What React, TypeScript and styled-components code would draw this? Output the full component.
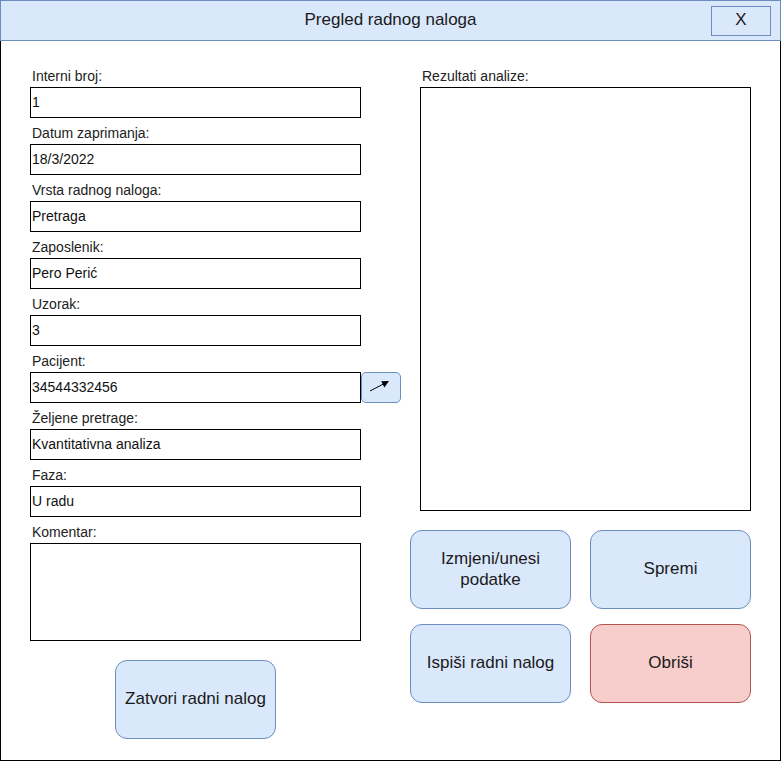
import React from "react";
import styled, { createGlobalStyle } from "styled-components";

const Global = createGlobalStyle`
  html, body { margin: 0; padding: 0; background: #fff; }
  * { box-sizing: border-box; }
  body { font-family: "Liberation Sans", Arial, Helvetica, sans-serif; color: #1a1a1a; }
`;

const Window = styled.div`
  width: 781px;
  height: 761px;
  display: flex;
  flex-direction: column;
`;

const TitleBar = styled.div`
  height: 41px;
  flex: none;
  background: #dae8fc;
  border: 1px solid #6c8ebf;
  display: grid;
  grid-template-columns: 1fr auto 1fr;
  align-items: center;
`;

const Title = styled.div`
  grid-column: 2;
  font-size: 17px;
  line-height: 20px;
  padding-bottom: 2px;
  color: #1a1a1a;
`;

const CloseButton = styled.div`
  grid-column: 3;
  justify-self: end;
  margin-right: 9px;
  margin-top: 1px;
  width: 60px;
  height: 30px;
  border: 1px solid #6c8ebf;
  display: flex;
  align-items: center;
  justify-content: center;
  font-size: 17px;
  padding-bottom: 2px;
  color: #1a1a1a;
`;

const Body = styled.div`
  flex: 1;
  border: 1px solid #000;
  border-top: none;
  display: flex;
  padding: 27px 0 0 29px;
`;

const LeftColumn = styled.div`
  width: 331px;
  display: flex;
  flex-direction: column;
  gap: 7px;
`;

const RightColumn = styled.div`
  width: 341px;
  margin-left: 49px;
  display: flex;
  flex-direction: column;
`;

const Field = styled.div`
  display: flex;
  flex-direction: column;
`;

const Label = styled.div<{ $indent?: number }>`
  font-size: 14px;
  line-height: 16px;
  height: 16px;
  margin-bottom: 3px;
  padding-left: ${(p) => 2 + (p.$indent ?? 0)}px;
  color: #222;
  white-space: nowrap;
`;

const InputRow = styled.div`
  display: flex;
`;

const Input = styled.div`
  width: 331px;
  height: 31px;
  flex: none;
  border: 1px solid #000;
  font-size: 14px;
  display: flex;
  align-items: center;
  padding: 0 0 2px 1px;
  color: #111;
`;

const TextArea = styled.div<{ $h: number; $indent?: number }>`
  width: 331px;
  height: ${(p) => p.$h}px;
  margin-left: ${(p) => p.$indent ?? 0}px;
  border: 1px solid #000;
`;

const ArrowButton = styled.div`
  width: 40px;
  height: 31px;
  flex: none;
  background: #dae8fc;
  border: 1px solid #6c8ebf;
  border-radius: 5px;
  display: flex;
`;

const ActionButton = styled.div<{ $danger?: boolean }>`
  width: 161px;
  height: 79px;
  border-radius: 12px;
  background: ${(p) => (p.$danger ? "#f8cecc" : "#dae8fc")};
  border: 1px solid ${(p) => (p.$danger ? "#b85450" : "#6c8ebf")};
  display: flex;
  align-items: center;
  justify-content: center;
  text-align: center;
  font-size: 17px;
  line-height: 21px;
  color: #1a1a1a;
  padding: 0 6px 2px;
`;

const CloseRow = styled.div`
  display: flex;
  justify-content: center;
  margin-top: 12px;
`;

const ButtonGrid = styled.div`
  display: grid;
  grid-template-columns: 161px 161px;
  column-gap: 19px;
  row-gap: 15px;
  margin-top: 19px;
`;

const fields: [string, string][] = [
  ["Interni broj:", "1"],
  ["Datum zaprimanja:", "18/3/2022"],
  ["Vrsta radnog naloga:", "Pretraga"],
  ["Zaposlenik:", "Pero Perić"],
  ["Uzorak:", "3"],
  ["Pacijent:", "34544332456"],
  ["Željene pretrage:", "Kvantitativna analiza"],
  ["Faza:", "U radu"],
];

const ArrowIcon = () => (
  <svg width="38" height="29" viewBox="0 0 38 29">
    <line x1="8" y1="18" x2="21" y2="11.2" stroke="#000" strokeWidth="1" />
    <polygon points="27,8 22.4,14.4 19.2,8.2" fill="#000" />
  </svg>
);

export default function App() {
  return (
    <>
      <Global />
      <Window>
        <TitleBar>
          <Title>Pregled radnog naloga</Title>
          <CloseButton>X</CloseButton>
        </TitleBar>
        <Body>
          <LeftColumn>
            {fields.map(([label, value]) => (
              <Field key={label}>
                <Label>{label}</Label>
                <InputRow>
                  <Input>{value}</Input>
                  {label === "Pacijent:" && (
                    <ArrowButton>
                      <ArrowIcon />
                    </ArrowButton>
                  )}
                </InputRow>
              </Field>
            ))}
            <Field>
              <Label>Komentar:</Label>
              <TextArea $h={98} />
            </Field>
            <CloseRow>
              <ActionButton>Zatvori radni nalog</ActionButton>
            </CloseRow>
          </LeftColumn>
          <RightColumn>
            <Field>
              <Label $indent={10}>Rezultati analize:</Label>
              <TextArea $h={424} $indent={10} />
            </Field>
            <ButtonGrid>
              <ActionButton>Izmjeni/unesi podatke</ActionButton>
              <ActionButton>Spremi</ActionButton>
              <ActionButton>Ispiši radni nalog</ActionButton>
              <ActionButton $danger>Obriši</ActionButton>
            </ButtonGrid>
          </RightColumn>
        </Body>
      </Window>
    </>
  );
}
